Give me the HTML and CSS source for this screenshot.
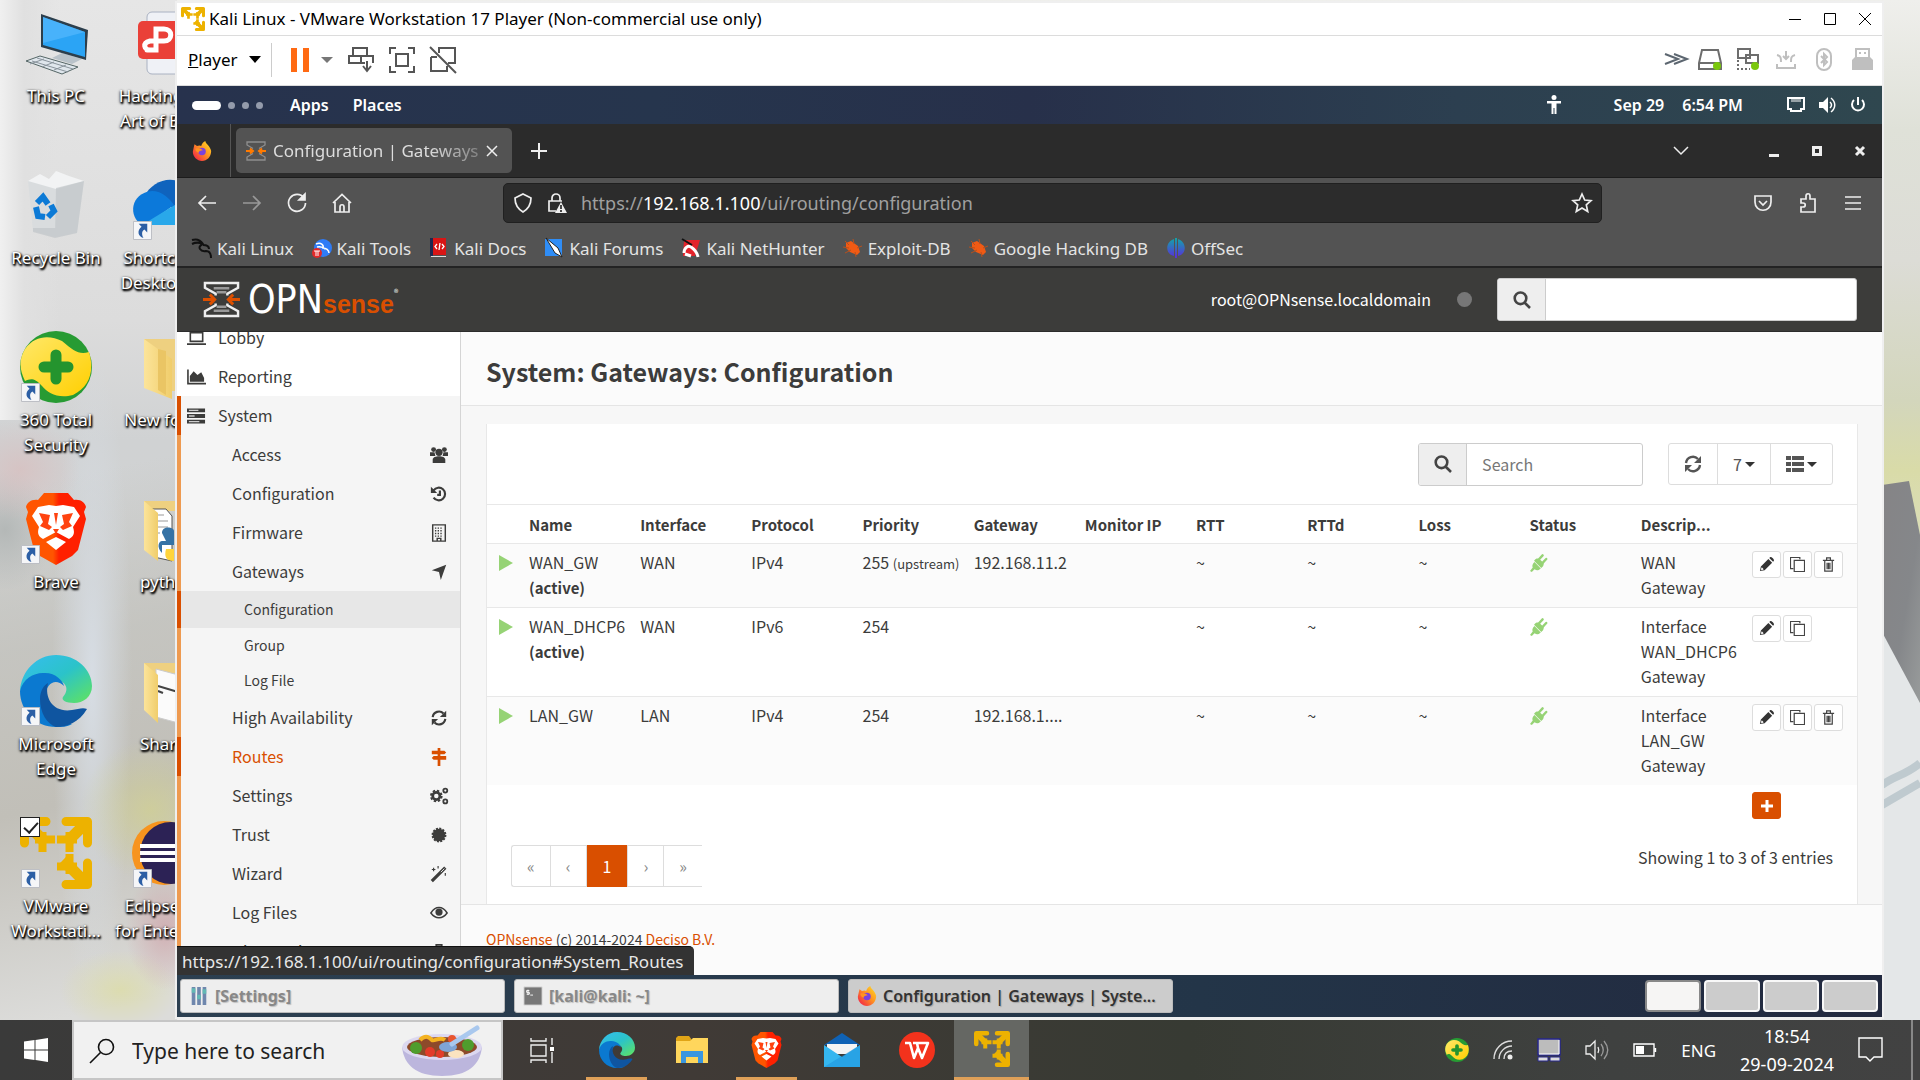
FILE: index.html
```html
<!DOCTYPE html>
<html lang="en">
<head>
<meta charset="utf-8">
<title>Configuration | Gateways | System</title>
<link rel="stylesheet" href="styles.css">
</head>
<body>
<svg class="defs" aria-hidden="true">
  <defs>
    <linearGradient id="g-edge" x1="0" y1="0" x2="1" y2="1"><stop offset="0" stop-color="#36bdf0"/><stop offset=".5" stop-color="#2bc3c9"/><stop offset="1" stop-color="#62e45c"/></linearGradient>
    <linearGradient id="g-brave" x1="0" y1="0" x2="1" y2="0"><stop offset=".45" stop-color="#ff5500"/><stop offset=".55" stop-color="#ff2000"/></linearGradient>
    <linearGradient id="g-fold" x1="0" y1="0" x2="1" y2="0"><stop offset="0" stop-color="#fce49a"/><stop offset="1" stop-color="#f0cd6b"/></linearGradient>
    <linearGradient id="g-fox" x1="1" y1="0" x2="0" y2="1"><stop offset="0" stop-color="#ffe226"/><stop offset=".45" stop-color="#ff9420"/><stop offset="1" stop-color="#f0104f"/></linearGradient>
    <linearGradient id="g-off" x1="0" y1="0" x2="0" y2="1"><stop offset="0" stop-color="#12a6a8"/><stop offset="1" stop-color="#5b2bdc"/></linearGradient>
    <linearGradient id="g-yel" x1="0" y1="0" x2="1" y2="1"><stop offset="0" stop-color="#ffe869"/><stop offset="1" stop-color="#ffcf00"/></linearGradient>
  </defs>
  <symbol id="i-vmware" viewBox="0 0 72 72"><g fill="none" stroke="#edb200"><path stroke-width="9" stroke-linecap="round" stroke-linejoin="round" d="M26 4.500H4.500V26M46 4.500H67.500V26M46 67.500H67.500V46"/><path stroke-width="11" d="M6 6 26 26M66 6 46 26M66 66 43 43"/><path stroke-width="8" d="M15 22.500H35M22.500 15V35M37 22.500H57M49.500 15V35M37 49.500H57M49.500 37V57"/></g></symbol>
  <symbol id="i-edge" viewBox="0 0 72 72"><path fill="url(#g-edge)" d="M0 36C1 16 17 0 36 0c21 0 36 15 36 31 0 11-9 17-18 17-8 0-13-3-11-6 8-9 1-17-9-18C18 21 6 25 0 36z"/><path fill="#0b79d0" d="M0 36c3-13 15-19 25-18 11 0 18 8 19 13-8-8-18-3-18 9 0 12 10 29 26 29-5 3-10 3-16 3C16 72 0 56 0 36z"/><path fill="#0f55a0" d="M20 44c0-8 4-14 8-16-4 16 6 30 24 27 6-1 11-3 15-1-8 14-21 18-31 18-9-3-16-14-16-28z"/></symbol>
  <symbol id="i-brave" viewBox="0 0 62 72"><path fill="url(#g-brave)" d="M19 0h24l6 7c7-1 11 3 12 7l-2 5 2 7-8 31-6 6-16 9-16-9-6-6L1 26l2-7-2-5c1-4 5-8 12-7z"/><path fill="#fff" d="M13 14l11-2 7 1 7-1 11 2 6 9-7 11c2 6 1 9-4 12l-13-7-13 7c-5-3-6-6-4-12L7 23zM31 44l10 5-10 8-10-8z"/><path fill="#ff4310" d="M14 20l11 2-2 9 4 3-3 3-9-4 3-4zM48 20l-11 2 2 9-4 3 3 3 9-4-3-4zM28 36h6l-3 5zM29 20h4l-2 12z"/></symbol>
  <symbol id="i-360" viewBox="0 0 72 72"><circle cx="36" cy="36" r="36" fill="#279b33"/><path fill="url(#g-yel)" d="M5 18C15 4 30 4 42 10c12 10 17 14 27 11 6 20 0 35-16 43-15 4-25-2-31-9-8-9-12-7-17-5C-1 38-1 28 5 18z"/><path stroke="#24942e" stroke-width="11" stroke-linecap="round" d="M36 24v24M24 36h24"/></symbol>
  <symbol id="i-shortcut" viewBox="0 0 20 20"><path fill="#f5f6f8" stroke="#b9bcc2" d="M.5.5h19v19H.5z"/><path fill="#2c5fa5" d="M6 3h9v9l-3-3c-3 2-3 5-1 9-6-2-7-8-2-12z"/></symbol>
  <symbol id="i-firefox" viewBox="0 0 24 24"><path fill="url(#g-fox)" d="M2 8 3 4l3 2c2-1 4-1 5 0 1-3 3-5 5-6 0 3 6 6 7 12C23 19 18 24 12 24S1 19 1 13z"/><circle cx="12" cy="12.500" r="4.500" fill="#7a42dd"/><path fill="#ff9420" d="M4 9c4-1 7 0 9 2-3 0-5 1-5 3-3-1-4-3-4-5z"/></symbol>
  <symbol id="i-opn" viewBox="0 0 38 38"><g fill="none" stroke="#eee" stroke-width="2.500"><path d="M13 15V13L2 7V2H36V7L25 13V15M13 23V25L2 31V36H36V31L25 25V23"/><path stroke="#999" d="M11 7.500H27M14 11.500H24M14 26.500H24M11 30.500H27"/><path stroke="#dd5000" stroke-width="3" d="M0 19H12M7 14l5 5-5 5M38 19H26M31 14l-5 5 5 5"/></g></symbol>
  <symbol id="i-favicon" viewBox="0 0 20 20"><g fill="none" stroke="#8f8f8f" stroke-width="1.300"><path d="M7 7.500L1 4V1h18v3l-6 3.500M7 12.500L1 16v3h18v-3l-6-3.500"/><path stroke="#ff7a00" stroke-width="2" d="M0 10h6M4 7.500L7 10l-3 2.500M20 10h-6M16 7.500L13 10l3 2.500"/></g></symbol>
  <symbol id="i-search" viewBox="0 0 20 20"><path fill="none" stroke="currentColor" stroke-width="2.600" d="M8.500 2.500a5.800 5.800 0 1 1 0 11.600 5.800 5.800 0 0 1 0-11.600zM13 13l5 5"/></symbol>
  <symbol id="i-refresh" viewBox="0 0 18 18"><path fill="none" stroke="currentColor" stroke-width="2.400" d="M2 8a7 7 0 0 1 12-4M16 10a7 7 0 0 1-12 4"/><path fill="currentColor" d="M17 1v7h-7zM1 17v-7h7z"/></symbol>
  <symbol id="i-plug" viewBox="0 0 20 20"><path fill="#96d375" d="M5 9l7 7c-3 3-6 2-7 1l-3 3-2-1 3-4C2 13 3 11 5 9zM4.500 7.500l8 8 2-2c1-2 1-3 0-4l-4-4c-2-1-4-1-6 2z"/><path stroke="#96d375" stroke-width="2.600" stroke-linecap="round" d="M9 7l5-5.500M13 11l5-5.500"/></symbol>
  <symbol id="i-pencil" viewBox="0 0 16 16"><path fill="#333" d="M1 15l1-5 8-8 4 4-8 8zM11 1l1-1c2 0 4 2 4 4l-1 1z"/><path fill="#fff" d="M3 11l2 2-2 1-1-1z"/></symbol>
  <symbol id="i-copy" viewBox="0 0 16 16"><path fill="none" stroke="#444" stroke-width="1.300" d="M3.500 12.500h-3v-12h10v2M4.500 3.500h11v12h-11z"/></symbol>
  <symbol id="i-trash" viewBox="0 0 14 16"><path fill="none" stroke="#444" stroke-width="1.300" d="M1 3.500h12M5 3V1h4v2M3 4v11h8V4M5.500 6v7M7 6v7M8.500 6v7"/></symbol>
  <symbol id="i-bug" viewBox="0 0 20 20"><path fill="#f05a14" d="M3 5l5-2 7 5 2 6-3 3-7-3-4-4z"/><path stroke="#b8501c" d="M2 3l4 4M0 9l6 1M2 15l6-3M10 1l1 5M19 8l-5 2M13 19l-1-5"/></symbol>
</svg>

<main class="desktop">
  <svg class="wall" viewBox="0 0 38 1020" preserveAspectRatio="none" aria-hidden="true">
    <defs><linearGradient id="g-rock" x1="0" y1="0" x2="1" y2="1"><stop offset="0" stop-color="#858486"/><stop offset=".6" stop-color="#85878a"/><stop offset="1" stop-color="#989b9b"/></linearGradient></defs>
    <path fill="#e4e7e8" d="M0 600h38v420H0z"/>
    <path fill="url(#g-rock)" d="M0 485L27 481 38 535V703L0 632z"/>
    <path fill="none" stroke="#bfcacf" stroke-width="8" d="M0 785c14-10 24-10 38-22M0 805l38-22"/>
  </svg>
  <ul class="shortcuts">
    <li><span class="pic"><svg viewBox="0 0 72 72"><path fill="#dfe6ec" stroke="#566" d="M6 54l14-5 38 11-16 7z"/><path stroke="#8a949c" stroke-width="1" d="M12 54l36 11M17 51l36 11M24 52l-14 5M34 55l-12 5M46 58l-12 5"/><path fill="#b9c2c9" d="M32 51l10-5 20 6-10 5z"/><path fill="#2c3e4c" d="M21 7l47 16-2 30-45-13z"/><path fill="#2ba4f5" d="M23 10l42 15v25L23 38z"/><path fill="#5bbcff" d="M23 10l42 15-42 11z" opacity=".6"/></svg></span><span>This PC</span></li>
    <li><span class="pic"><svg viewBox="0 0 72 72"><rect x="15" y="5" width="50" height="62" rx="5" fill="#eff1f6" stroke="#aab2c2"/><rect x="6" y="14" width="44" height="38" rx="5" fill="#ea4038"/><path fill="none" stroke="#fff" stroke-width="5" stroke-linecap="round" d="M15 43h9V22h8c9 0 9 12 0 12H18c-8 2-6 9 0 9"/></svg></span><span>Hacking The<br>Art of Expl...</span></li>
    <li><span class="pic"><svg viewBox="0 0 72 72"><path fill="#d9dcde" d="M8 12h56l-7 52-22 4-22-6z"/><path fill="#f2f3f4" d="M8 12l12-7 9 5 7-8 13 5 15 5-28 8z"/><path fill="#bcc2c5" d="M36 19l28-7-7 52-22 4zM13 59l44 0v5l-22 5-22-6z" opacity=".6"/><path fill="none" stroke="#0c7ad6" stroke-width="6" d="M17 34l6-6 5 7M16 38l2 9 7 1M28 48l6-6-3-6"/></svg></span><span>Recycle Bin</span></li>
    <li><span class="pic"><svg viewBox="0 0 72 72"><path fill="#0f63bd" d="M12 28C22 8 48 4 60 24v14H18z"/><path fill="#0c79da" d="M10 56C-4 48-2 24 20 22c10 0 18 8 22 14l-28 20z"/><path fill="#29a8ea" d="M10 56l36-22 26 4v18z"/></svg><svg class="link"><use href="#i-shortcut"/></svg></span><span>Shortcut to<br>Desktop file</span></li>
    <li><span class="pic"><svg><use href="#i-360"/></svg><svg class="link"><use href="#i-shortcut"/></svg></span><span>360 Total<br>Security</span></li>
    <li><span class="pic"><svg viewBox="0 0 72 72"><path fill="#eed080" d="M12 8h50v52H24z"/><path fill="url(#g-fold)" d="M12 8l28 20v40L12 57z"/><path fill="#eac564" d="M26 18l8 2v44l-8-5z"/></svg></span><span>New folder</span></li>
    <li><span class="pic"><svg><use href="#i-brave"/></svg><svg class="link"><use href="#i-shortcut"/></svg></span><span>Brave</span></li>
    <li><span class="pic"><svg viewBox="0 0 72 72"><path fill="#eed080" d="M12 8h50v10H12z"/><path fill="#fff" stroke="#555" d="M20 16h14l6 7v45L22 64z"/><path stroke="#999" d="M22 22h10M22 28h14M22 34h14M22 40h6"/><path fill="#3572a5" d="M30 40c0-8 12-6 12-2v14H30v8c-6-6-3-12 0-12h4z"/><path fill="#ffd43b" d="M34 56h8v12c-8 0-10-4-8-12z"/><path fill="url(#g-fold)" d="M12 8l14 12v48L12 57z"/></svg></span><span>python</span></li>
    <li><span class="pic"><svg><use href="#i-edge"/></svg><svg class="link"><use href="#i-shortcut"/></svg></span><span>Microsoft<br>Edge</span></li>
    <li><span class="pic"><svg viewBox="0 0 72 72"><path fill="#eed080" d="M12 8h50v10H12z"/><path fill="#fbfbfb" stroke="#ccc" d="M24 14l30 8v48l-30-8z"/><path stroke="#444" stroke-width="2" d="M26 31l20 6M26 36l5 2"/><path fill="url(#g-fold)" d="M12 8l14 12v48L12 55z"/></svg></span><span>Shared</span></li>
    <li><span class="pic"><svg><use href="#i-vmware"/></svg><svg class="link"><use href="#i-shortcut"/></svg><input class="pick" type="checkbox" checked aria-label="Select VMware Workstation"></span><span>VMware<br>Workstati...</span></li>
    <li><span class="pic"><svg viewBox="0 0 72 72"><circle cx="32" cy="36" r="32" fill="#f7941e"/><circle cx="39" cy="36" r="31" fill="#2c2255"/><path stroke="#fff" stroke-width="4" d="M8 29h64M8 36h64M8 43h64"/></svg><svg class="link"><use href="#i-shortcut"/></svg></span><span>Eclipse IDE<br>for Enterpri...</span></li>
  </ul>

  <section class="vm">
    <header class="vm-title">
      <svg class="s24"><use href="#i-vmware"/></svg>
      <h2>Kali Linux - VMware Workstation 17 Player (Non-commercial use only)</h2>
      <div class="vm-ctl">
        <button aria-label="Minimise"><svg viewBox="0 0 12 12"><path d="M0 6.500h12"/></svg></button>
        <button aria-label="Maximise"><svg viewBox="0 0 12 12"><path d="M.5.5h11v11H.5z"/></svg></button>
        <button aria-label="Close"><svg viewBox="0 0 12 12"><path d="M0 0l12 12M12 0L0 12"/></svg></button>
      </div>
    </header>
    <div class="vm-tools">
      <button class="player"><span><u>P</u>layer</span><svg width="12" height="7" viewBox="0 0 12 7"><path d="M0 0h12L6 7z"/></svg></button>
      <button class="pause" aria-label="Suspend"><svg width="18" height="24" viewBox="0 0 18 24"><path fill="#ff6a13" d="M0 0h6v24H0zM12 0h6v24h-6z"/></svg></button>
      <button class="caret" aria-label="Power options"><svg width="12" height="6" viewBox="0 0 12 6"><path fill="#777" d="M0 0h12L6 6z"/></svg></button>
      <div class="vm-icons">
        <button aria-label="Send keys"><svg viewBox="0 0 28 28"><path d="M6 2h14v8H6zM2 10h12v7H2zM14 10h12v7M14 17h4M20 15v9M16 20l4 5 4-5"/></svg></button>
        <button aria-label="Full screen"><svg viewBox="0 0 28 28"><path d="M2 8V2h6M20 2h6v6M26 20v6h-6M8 26H2v-6M8 8h12v12H8z"/></svg></button>
        <button aria-label="Unity"><svg viewBox="0 0 28 28"><path d="M10 7V2h16v15h-7M2 11v14h16v-5M2 11h6M1 1l26 26"/></svg></button>
      </div>
      <div class="vm-devices">
        <svg viewBox="0 0 26 26"><path stroke="#5c6670" d="M6 7l13 5-13 5M15 7l13 5-13 5"/></svg>
        <svg viewBox="0 0 26 26"><path d="M5 3h16l3 13v6H2v-6zM2 16h22"/><circle cx="20" cy="19" r="4" fill="#7ac70c"/></svg>
        <svg viewBox="0 0 26 26"><path d="M3 2h12v9H3zM11 8h12v8H11z"/><path stroke-dasharray="2 2" d="M3 13v9h12"/><circle cx="20" cy="19" r="4" fill="#7ac70c"/></svg>
        <svg class="off" viewBox="0 0 26 26"><path d="M4 17v4h18v-4M13 4v7M10 9l3 3 3-3M4 8c4 1 4 3 4 7M22 8c-4 1-4 3-4 7"/></svg>
        <svg class="off" viewBox="0 0 26 26"><rect x="6" y="2" width="14" height="21" rx="7"/><path d="M10 9l6 6-3 3V7l3 3-6 6"/></svg>
        <svg class="off" viewBox="0 0 26 26"><path d="M7 2h13v9H7zM10 6h2M15 6h2"/><path fill="#bfbfbf" stroke="none" d="M3 13l3-3h15l3 3v10H3z"/></svg>
      </div>
    </div>

    <div class="panel">
      <div class="spaces"><i></i><b></b><b></b><b></b></div>
      <a href="#">Apps</a><a href="#">Places</a>
      <svg class="person" width="16" height="20" viewBox="0 0 16 20"><circle cx="8" cy="2.500" r="2.500"/><path d="M1 6h14v2.500h-4.500V19h-2v-6h-1v6h-2V8.500H1z"/></svg>
      <time><span>Sep 29</span><span>6:54 PM</span></time>
      <div class="sys">
        <svg viewBox="0 0 18 18"><path fill="none" stroke="#fff" stroke-width="2" d="M1 2h16v11h-3v2H4v-2H1z"/><path stroke="#fff" d="M5 3v3M7 3v3M9 3v3M11 3v3M13 3v3"/></svg>
        <svg viewBox="0 0 18 18"><path d="M1 6h4l5-5v16l-5-5H1z"/><path fill="none" stroke="#fff" stroke-width="1.500" d="M12 6c2 2 2 4 0 6M13 2c5 4 5 10 0 14"/></svg>
        <svg viewBox="0 0 18 18"><path fill="none" stroke="#fff" stroke-width="2" d="M5 4a6 6 0 1 0 8 0M9 1v8"/></svg>
      </div>
    </div>

    <div class="tabs">
      <button class="view" aria-label="Firefox View"><svg width="20" height="20"><use href="#i-firefox"/></svg></button>
      <div class="tab"><svg width="20" height="20"><use href="#i-favicon"/></svg><span>Configuration | Gateways</span><button aria-label="Close tab"><svg width="10" height="10" viewBox="0 0 10 10"><path d="M0 0l10 10M10 0L0 10"/></svg></button></div>
      <button class="plus" aria-label="New tab"><svg width="16" height="16" viewBox="0 0 16 16"><path d="M8 0v16M0 8h16"/></svg></button>
      <button class="all" aria-label="List all tabs"><svg width="16" height="10" viewBox="0 0 16 10"><path d="M1 1l7 7 7-7"/></svg></button>
      <div class="fx-ctl">
        <button aria-label="Minimise"><svg width="12" height="12" viewBox="0 0 12 12"><path stroke-width="3" d="M1 10.500h10"/></svg></button>
        <button aria-label="Maximise"><svg width="12" height="12" viewBox="0 0 12 12"><path stroke-width="3" d="M2.500 2.500h7v7h-7z"/></svg></button>
        <button aria-label="Close"><svg width="12" height="12" viewBox="0 0 12 12"><path stroke-width="3" d="M2 2l8 8M10 2l-8 8"/></svg></button>
      </div>
    </div>

    <div class="nav">
      <div class="nav-l">
        <button aria-label="Back"><svg viewBox="0 0 20 20"><path d="M19 10H2M9 3l-7 7 7 7"/></svg></button>
        <button aria-label="Forward" disabled><svg viewBox="0 0 20 20"><path d="M1 10h17M11 3l7 7-7 7"/></svg></button>
        <button aria-label="Reload"><svg viewBox="0 0 20 20"><path d="M17 5a8.500 8.500 0 1 0 1.500 5"/><path fill="#eee" d="M18 1v6h-6z"/></svg></button>
        <button aria-label="Home"><svg viewBox="0 0 20 20"><path d="M1 10l9-8.500 9 8.500M3 9v10h14V9M8 19v-5c0-3 4-3 4 0v5"/></svg></button>
      </div>
      <div class="url">
        <svg viewBox="0 0 20 20"><path d="M10 1l8 4c0 7-3 11-8 14C5 16 2 12 2 5z"/></svg>
        <svg viewBox="0 0 20 20"><path d="M5 8V5a4 4 0 0 1 8 0v3M9 18H2V8h13"/><path fill="#eee" stroke="none" d="M14 9l6 11H8z"/><path stroke="#2b2b2b" d="M14 12v4M14 17v2"/></svg>
        <p>https://<b>192.168.1.100</b>/ui/routing/configuration</p>
        <button aria-label="Bookmark"><svg viewBox="0 0 20 20"><path d="M10 1l2.700 6 6.300.6-4.700 4.300 1.400 6.600L10 15l-5.700 3.500 1.400-6.600L1 7.600 7.300 7z"/></svg></button>
      </div>
      <div class="nav-r">
        <button aria-label="Pocket"><svg viewBox="0 0 20 20"><path d="M2 3h16v6c0 11-16 11-16 0zM6 8l4 4 4-4"/></svg></button>
        <button aria-label="Extensions"><svg viewBox="0 0 20 20"><path d="M3 19V14h2c3 0 3-4 0-4H3V6h5V3c0-3 4-3 4 0v3h5v13z"/></svg></button>
        <button aria-label="Menu"><svg viewBox="0 0 20 20"><path d="M2 4h16M2 10h16M2 16h16"/></svg></button>
      </div>
    </div>
    <nav class="marks">
      <a href="#"><svg viewBox="0 0 20 20"><path fill="none" stroke="#111" stroke-width="2" d="M0 2c6-2 9 1 11 4-7 3-2 8 3 7 4 0 5 3 5 7M0 6c4-2 7-2 11 0M11 7c4 0 6 2 6 4"/></svg>Kali Linux</a>
      <a href="#"><svg viewBox="0 0 20 20"><circle cx="11" cy="10" r="9" fill="#2f7cf6"/><path fill="none" stroke="#fff" stroke-width="1.500" d="M4 6c5-2 8 1 7 4 3 0 6 2 6 5M5 9c4-1 6 0 8 2"/><circle cx="5" cy="15" r="5" fill="#e02a2a"/><path stroke="#fff" d="M2 13h6M4 13v5M6 13v5"/></svg>Kali Tools</a>
      <a href="#"><svg viewBox="0 0 20 20"><path fill="#1d2850" d="M1 0h3v18H1z"/><path fill="#d81515" d="M4 0h13v17H4z"/><path stroke="#ddd" d="M2 18.500h15"/><path fill="none" stroke="#fff" stroke-width="1.300" d="M8 6L6 8.500 8 11M13 6l2 2.500-2 2.500M11 5l-1 7"/></svg>Kali Docs</a>
      <a href="#"><svg viewBox="0 0 20 20"><path fill="#2f8df6" d="M1 1h17v17H1z"/><path fill="#fff" stroke="#222" d="M2 0l12 10 4 9-7-4z"/></svg>Kali Forums</a>
      <a href="#"><svg viewBox="0 0 20 20"><path fill="#e3242b" d="M3 2h16L14 18H2z"/><path fill="none" stroke="#fff" stroke-width="3" d="M3 15c0-5 4-8 7-6s6 5 7 10M4 16l6 2"/><path stroke="#111" stroke-width="2" d="M1 1l10 6"/></svg>Kali NetHunter</a>
      <a href="#"><svg><use href="#i-bug"/></svg>Exploit-DB</a>
      <a href="#"><svg><use href="#i-bug"/></svg>Google Hacking DB</a>
      <a href="#"><svg viewBox="0 0 20 20"><path fill="url(#g-off)" d="M8 1v17C-1 16-1 4 8 1zM9 0h2v20H9zM12 1v17c9-2 9-14 0-17z"/></svg>OffSec</a>
    </nav>

    <header class="opn">
      <a class="brand" href="#" aria-label="OPNsense"><svg width="37" height="37"><use href="#i-opn"/></svg><span class="opn-a">OPN</span><span class="opn-b">sense</span><sup>®</sup></a>
      <span class="user">root@OPNsense.localdomain</span>
      <i class="dot"></i>
      <label class="group find"><span><svg><use href="#i-search"/></svg></span><input type="text" aria-label="Search menu"></label>
    </header>

    <div class="page">
      <nav class="side">
        <ul>
          <li><a href="#"><svg class="pre" viewBox="0 0 20 16"><path fill="none" stroke="#3c3c3b" stroke-width="1.700" d="M3.500 2.500h13v9h-13zM0 14.500h20"/></svg>Lobby</a></li>
          <li><a href="#"><svg class="pre" viewBox="0 0 20 16"><path fill="none" stroke="#3c3c3b" stroke-width="1.700" d="M1 0v15h19"/><path fill="#3c3c3b" d="M3 13V7l4-5 4 4 4-3 3 6v4z"/></svg>Reporting</a></li>
          <li class="open"><a href="#" class="on"><svg class="pre" viewBox="0 0 20 16"><path fill="#3c3c3b" d="M0 0h19v4H0zM0 6h19v4H0zM0 12h19v4H0z"/><path stroke="#ccc" stroke-width="1.400" d="M2 2h10M2 8h6M2 14h11"/></svg>System</a>
            <ul>
              <li><a href="#">Access<svg viewBox="0 0 20 20"><circle cx="10" cy="7" r="4"/><circle cx="4" cy="4" r="2.700"/><circle cx="16" cy="4" r="2.700"/><path d="M3 19v-4c0-5 14-5 14 0v4zM0 7h5l1 4H0zM20 7h-5l-1 4h6z"/></svg></a></li>
              <li><a href="#">Configuration<svg viewBox="0 0 20 20"><path fill="none" stroke="#3c3c3b" stroke-width="2.400" d="M4 6a7 7 0 1 1 0 8M11 6v5H8"/><path d="M1 2v7h7z"/></svg></a></li>
              <li><a href="#">Firmware<svg viewBox="0 0 20 20"><path fill="none" stroke="#3c3c3b" stroke-width="1.600" d="M3 1h14v18H3zM8 19v-3h4v3"/><path stroke="#3c3c3b" stroke-width="1.500" stroke-dasharray="1.500 1.500" d="M5.500 4.500h9M5.500 7.500h9M5.500 10.500h9M5.500 13.500h9"/></svg></a></li>
              <li><a href="#">Gateways<svg viewBox="0 0 20 20"><path d="M18 2l-6 17-2-9-8-2z"/></svg></a>
                <ul>
                  <li><a href="#" class="on sel">Configuration</a></li>
                  <li><a href="#">Group</a></li>
                  <li><a href="#">Log File</a></li>
                </ul></li>
              <li><a href="#">High Availability<svg viewBox="-1 -1 20 20"><use href="#i-refresh" width="18" height="18"/></svg></a></li>
              <li><a href="#" class="on hot">Routes<svg viewBox="0 0 20 20"><path d="M8.500 0h3v20h-3zM2 3h14l2 2-2 2H2zM4 9h14v4H4l-2-2z"/></svg></a></li>
              <li><a href="#">Settings<svg viewBox="0 0 20 20"><g fill="none" stroke="#3c3c3b"><circle cx="7" cy="10" r="4" stroke-width="3"/><circle cx="7" cy="10" r="6" stroke-width="2" stroke-dasharray="2.700 2"/><circle cx="17" cy="4" r="2.200" stroke-width="2"/><circle cx="17" cy="16" r="2.200" stroke-width="2"/></g></svg></a></li>
              <li><a href="#">Trust<svg viewBox="0 0 20 20"><circle cx="10" cy="10" r="7"/><circle cx="10" cy="10" r="7" fill="none" stroke="#3c3c3b" stroke-width="2.500" stroke-dasharray="2.200 1.400"/></svg></a></li>
              <li><a href="#">Wizard<svg viewBox="0 0 20 20"><path stroke="#3c3c3b" stroke-width="3.500" d="M2 18L17 3"/><path stroke="#f5f5f5" d="M12 8l4-4"/><path stroke="#3c3c3b" stroke-width="1.300" d="M4 3v4M2 5h4M9 1v3M17 9v3"/></svg></a></li>
              <li><a href="#">Log Files<svg viewBox="0 0 20 20"><path fill="none" stroke="#3c3c3b" stroke-width="1.700" d="M1 10c5-8 13-8 18 0-5 7-13 7-18 0z"/><circle cx="10" cy="9" r="4"/></svg></a></li>
              <li><a href="#">Diagnostics<svg viewBox="0 0 20 20"><path fill="none" stroke="#3c3c3b" stroke-width="2" d="M7 5V2h6v3"/><path d="M1 5h18v12H1z"/></svg></a></li>
            </ul></li>
        </ul>
      </nav>

      <section class="content">
        <h1>System: Gateways: Configuration</h1>
        <div class="card">
          <div class="bar">
            <label class="group seek"><span><svg><use href="#i-search"/></svg></span><input type="text" placeholder="Search" aria-label="Search"></label>
            <div class="btns">
              <button aria-label="Refresh"><svg width="18" height="18"><use href="#i-refresh"/></svg></button>
              <button>7<svg width="10" height="5" viewBox="0 0 10 5"><path fill="#333" d="M0 0h10L5 5z"/></svg></button>
              <button aria-label="Columns"><svg width="18" height="16" viewBox="0 0 18 16"><path fill="#555" d="M0 0h5v4H0zM6 0h12v4H6zM0 6h5v4H0zM6 6h12v4H6zM0 12h5v4H0zM6 12h12v4H6z"/></svg><svg width="10" height="5" viewBox="0 0 10 5"><path fill="#333" d="M0 0h10L5 5z"/></svg></button>
            </div>
          </div>
          <table>
            <colgroup><col class="c-run"><col span="11"><col class="c-cmd"></colgroup>
            <thead><tr><th></th><th>Name</th><th>Interface</th><th>Protocol</th><th>Priority</th><th>Gateway</th><th>Monitor IP</th><th>RTT</th><th>RTTd</th><th>Loss</th><th>Status</th><th>Descrip...</th><th></th></tr></thead>
            <tbody>
              <tr><td><i class="run"></i></td><td>WAN_GW <b>(active)</b></td><td>WAN</td><td>IPv4</td><td class="wide">255 <small>(upstream)</small></td><td>192.168.11.2</td><td></td><td>~</td><td>~</td><td>~</td><td><svg class="plug"><use href="#i-plug"/></svg></td><td>WAN Gateway</td>
                <td class="cmd"><div><button aria-label="Edit"><svg><use href="#i-pencil"/></svg></button><button aria-label="Clone"><svg><use href="#i-copy"/></svg></button><button aria-label="Delete"><svg><use href="#i-trash"/></svg></button></div></td></tr>
              <tr><td><i class="run"></i></td><td>WAN_DHCP6 <b>(active)</b></td><td>WAN</td><td>IPv6</td><td>254</td><td></td><td></td><td>~</td><td>~</td><td>~</td><td><svg class="plug"><use href="#i-plug"/></svg></td><td>Interface WAN_DHCP6 Gateway</td>
                <td class="cmd"><div><button aria-label="Edit"><svg><use href="#i-pencil"/></svg></button><button aria-label="Clone"><svg><use href="#i-copy"/></svg></button></div></td></tr>
              <tr><td><i class="run"></i></td><td>LAN_GW</td><td>LAN</td><td>IPv4</td><td>254</td><td class="wide">192.168.1....</td><td></td><td>~</td><td>~</td><td>~</td><td><svg class="plug"><use href="#i-plug"/></svg></td><td>Interface LAN_GW Gateway</td>
                <td class="cmd"><div><button aria-label="Edit"><svg><use href="#i-pencil"/></svg></button><button aria-label="Clone"><svg><use href="#i-copy"/></svg></button><button aria-label="Delete"><svg><use href="#i-trash"/></svg></button></div></td></tr>
            </tbody>
            <tfoot><tr><td colspan="12"></td><td class="cmd"><button class="add" aria-label="Add"><svg width="12" height="12" viewBox="0 0 12 12"><path stroke="#fff" stroke-width="3" d="M6 0v12M0 6h12"/></svg></button></td></tr></tfoot>
          </table>
          <div class="pager">
            <div class="pages"><a href="#">«</a><a href="#">‹</a><a href="#" class="cur">1</a><a href="#">›</a><a href="#">»</a></div>
            <p>Showing 1 to 3 of 3 entries</p>
          </div>
        </div>
        <footer><a href="#">OPNsense</a> (c) 2014-2024 <a href="#">Deciso B.V.</a></footer>
      </section>
      <output class="hint">https://192.168.1.100/ui/routing/configuration#System_Routes</output>
    </div>

    <div class="windows">
      <button class="dim"><svg viewBox="0 0 22 22"><path stroke="#6f87ad" stroke-width="4" d="M5 1v20M11 1v20M17 1v20"/><path stroke="#62b9b4" stroke-width="5" d="M3 5h4M9 12h4M15 6h4"/></svg>[Settings]</button>
      <button class="dim"><svg viewBox="0 0 22 22"><path fill="#777" stroke="#ddd" d="M1 1h20v20H1z"/><path fill="none" stroke="#fff" d="M7 5H4v2h3v2H4M5.500 4v6M8 10h3"/></svg>[kali@kali: ~]</button>
      <button class="live"><svg viewBox="0 0 24 24"><use href="#i-firefox"/></svg>Configuration | Gateways | Syste...</button>
      <div class="desks"><i class="at"></i><i></i><i></i><i></i></div>
    </div>
  </section>
</main>

<footer class="taskbar">
  <button class="start" aria-label="Start"><svg width="24" height="24" viewBox="0 0 24 24"><path fill="#fff" d="M0 3.500l10.500-1.500v9.500H0zM11.500 2L24 0v11.500H11.500zM0 12.500h10.500V22L0 20.500zM11.500 12.500H24V24l-12.500-2z"/></svg></button>
  <label class="search"><svg width="26" height="26" viewBox="0 0 26 26"><circle cx="17" cy="9" r="7.500" fill="none" stroke="#111" stroke-width="1.600"/><path stroke="#111" stroke-width="1.600" d="M11.500 14.500L1 25"/></svg><input type="text" placeholder="Type here to search" aria-label="Type here to search">
    <svg width="84" height="52" viewBox="0 0 84 52"><path fill="#bcb6dd" d="M0 22c2 18 14 29 40 29s38-11 40-29z"/><ellipse cx="40" cy="22" rx="40" ry="13" fill="#dcd8f0"/><ellipse cx="40" cy="22" rx="35" ry="10" fill="#8d4a2a"/><path stroke="#f4b321" stroke-width="4" fill="none" d="M18 15c6-6 10-2 12 0s8-4 13 0"/><circle cx="14" cy="23" r="6" fill="#4f9d2d"/><circle cx="66" cy="20" r="6" fill="#4f9d2d"/><circle cx="28" cy="27" r="5" fill="#e23c2a"/><circle cx="38" cy="29" r="4" fill="#e23c2a"/><circle cx="50" cy="14" r="4" fill="#e8552f"/><ellipse cx="54" cy="29" rx="8" ry="4" fill="#fbe3c0"/><ellipse cx="46" cy="22" rx="9" ry="5" fill="#7fa5d6"/><path stroke="#a9c8ee" stroke-width="5" stroke-linecap="round" d="M50 19L75 3"/></svg></label>
  <div class="apps">
    <button aria-label="Task view"><svg width="26" height="26" viewBox="0 0 26 26"><path fill="none" stroke="#eee" stroke-width="1.400" d="M2 1v3h15V1M2 8h15v11H2zM2 26v-3h15v3M23 1v7M23 15v11"/><path fill="#fff" d="M21 10h4v4h-4z"/></svg></button>
    <button class="open" aria-label="Microsoft Edge"><svg width="36" height="36"><use href="#i-edge"/></svg></button>
    <button aria-label="File Explorer"><svg width="32" height="28" viewBox="0 0 32 28"><path fill="#e0a416" d="M0 2l2-2h11l3 4v5H0z"/><path fill="#ffd65c" d="M0 5h14l3-3h15v25H0z"/><path fill="#3a96e0" d="M5 27V15h22v12h-5v-6H10v6z"/></svg></button>
    <button class="open" aria-label="Brave"><svg width="31" height="36"><use href="#i-brave"/></svg></button>
    <button aria-label="Mail"><svg width="36" height="34" viewBox="0 0 36 34"><path fill="#0f62b5" d="M0 12L18 0l18 12z"/><path fill="#f4f4f4" d="M3 11h30v10H3z"/><path fill="#35b6ef" d="M0 12l18 12 18-12v22H0z"/><path fill="#1b8fdc" d="M0 34l36-22v22z" opacity=".5"/></svg></button>
    <button aria-label="WPS Office"><svg width="36" height="36" viewBox="0 0 36 36"><circle cx="18" cy="18" r="18" fill="#f3321c"/><path fill="none" stroke="#fff" stroke-width="2.600" stroke-linejoin="round" d="M6 11h5l4 15 4-10 4 10 6-15H14M19 16l-1-5"/></svg></button>
    <button class="front" aria-label="VMware Player"><svg width="36" height="36"><use href="#i-vmware"/></svg></button>
  </div>
  <div class="tray">
    <svg width="24" height="24"><use href="#i-360"/></svg>
    <svg width="20" height="20" viewBox="0 0 20 20"><g fill="none" stroke="#ddd" stroke-width="1.400"><path d="M1 19C1 9 9 1 19 1M6 19c0-7 6-13 13-13M11 19c0-5 3-8 8-8"/></g><circle cx="17" cy="17" r="2.500" fill="#eee"/></svg>
    <svg width="24" height="24" viewBox="0 0 24 24"><path fill="#bcbcbc" stroke="#26268c" stroke-width="1.500" d="M1 1h22v16H1z"/><path fill="none" stroke="#fff" d="M2 16h20V2"/><path fill="#ddd" stroke="#26268c" d="M1 19h10v4H1zM13 19h10v4H13z"/></svg>
    <svg width="24" height="22" viewBox="0 0 24 22"><g fill="none" stroke="#eee" stroke-width="1.300"><path d="M1 7h4l5-5v18l-5-5H1zM13 8c1 2 1 4 0 6"/><path stroke="#999" d="M16 5c3 4 3 8 0 12M19 2c5 6 5 12 0 18"/></g></svg>
    <svg width="24" height="14" viewBox="0 0 24 14"><path fill="none" stroke="#fff" stroke-width="1.400" d="M1 1h20v12H1zM22.500 5v4"/><path fill="#fff" d="M3 3h8v8H3z"/></svg>
    <span>ENG</span>
    <time>18:54<br>29-09-2024</time>
    <svg width="25" height="26" viewBox="0 0 25 26"><path fill="none" stroke="#fff" stroke-width="1.400" d="M1 1h23v19h-8l-4 4-4-4H1z"/></svg>
  </div>
</footer>
</body>
</html>
```
FILE: styles.css
```css
* { box-sizing: border-box; }
body {
  margin: 0; height: 100vh; overflow: hidden;
  display: flex; flex-direction: column;
  font-family: "Noto Sans", "Open Sans", sans-serif; color: #3c3c3b;
}
ul { list-style: none; margin: 0; padding: 0; }
a { color: inherit; text-decoration: none; }
button { border: 0; background: none; padding: 0; margin: 0; font: inherit; color: inherit; display: flex; align-items: center; justify-content: center; }
h1, h2, p { margin: 0; font-weight: 400; }
input { font: inherit; border: 0; outline: 0; min-width: 0; }
svg { display: block; flex: none; overflow: visible; }
.defs { position: absolute; width: 0; height: 0; }

/* desktop */
.desktop {
  flex: 1; min-height: 0; position: relative; overflow: hidden;
  background:
    radial-gradient(ellipse 60px 50px at 20px 470px, #d9bcbcaa, transparent),
    radial-gradient(ellipse 70px 70px at 150px 810px, #d3d28caa, transparent),
    radial-gradient(ellipse 40px 60px at 165px 930px, #cf9fa6aa, transparent),
    radial-gradient(ellipse 60px 40px at 120px 990px, #dcdcb0, transparent),
    radial-gradient(ellipse 40px 330px at 92px 680px, #d7dde4, transparent),
    radial-gradient(ellipse 50px 60px at 5px 530px, #b4b8b7, transparent),
    linear-gradient(168deg, transparent 0 480px, #bfbeb8aa 640px, #c1bfb8 800px, #dcdcda 1010px) 0 0 / 177px 100% no-repeat,
    linear-gradient(90deg, #f0f0f0 0, #e0e0e0 24px, #e4e4e400 60px) 0 0 / 177px 420px no-repeat,
    linear-gradient(180deg, #e6e6e6 0, #dcdcdc 320px, #d0d2d3 440px, #d2d2cd 100%) 0 0 / 177px 100% no-repeat,
    linear-gradient(180deg, #efefec 0, #dfe1d8 130px, #dcdcd6 260px, #d3d6bc 400px, #d9dba8 470px, #dfe4e4 700px, #e6eaea 860px, #f0f0ef 100%);
}
.wall { position: absolute; right: 0; top: 0; width: 38px; height: 100%; }
.shortcuts {
  display: grid; grid-template-columns: 112px 112px; grid-auto-rows: 162px; padding-top: 7px;
  font-size: 17px; line-height: 25px; color: #fff; text-align: center;
  text-shadow: 1px 1px 2px #000, 0 1px 3px #000, 1px 2px 2px #000;
}
.shortcuts li { display: flex; flex-direction: column; align-items: center; gap: 4px; white-space: nowrap; }
.pic { position: relative; width: 72px; height: 72px; }
.pic > svg { width: 72px; height: 72px; }
.pic .link { position: absolute; left: 1px; bottom: 1px; width: 19px; height: 19px; }
.pick { position: absolute; left: 0; top: 0; width: 20px; height: 20px; margin: 0; appearance: none; background: #fff; border: 1px solid #222; }
.pick::after { content: ""; position: absolute; left: 6px; top: 1px; width: 6px; height: 12px; border: solid #222; border-width: 0 2px 2px 0; transform: rotate(42deg); }

/* virtual machine window */
.vm {
  position: absolute; left: 177px; right: 38px; top: 3px; bottom: 3px;
  display: flex; flex-direction: column; background: #fff; box-shadow: 0 0 0 2px #efefef;
}
.vm-title { display: flex; align-items: center; gap: 4px; height: 33px; padding-left: 4px; border-bottom: 1px solid #dcdcdc; color: #000; }
.s24 { width: 24px; height: 24px; }
.vm-title h2 { flex: 1; font-size: 17px; line-height: 32px; }
.vm-ctl { display: flex; gap: 23px; padding-right: 11px; }
.vm-ctl svg { width: 12px; height: 12px; fill: none; stroke: #000; }
.vm-tools { display: flex; align-items: center; height: 50px; padding: 0 7px 2px 11px; border-bottom: 1px solid #ddd; color: #000; font-size: 17px; }
.player { gap: 11px; padding-right: 10px; height: 34px; border-right: 1px solid #ccc; }
.pause { margin-left: 19px; }
.caret { margin-left: 12px; }
.vm-icons { display: flex; gap: 13px; margin-left: 14px; flex: 1; }
.vm-icons svg { width: 28px; height: 28px; fill: none; stroke: #555; stroke-width: 2; }
.vm-devices { display: flex; gap: 12px; }
.vm-devices svg { width: 26px; height: 26px; fill: none; stroke: #6d6d6d; stroke-width: 2; }
.vm-devices circle { stroke: none; }
.vm-devices .off { stroke: #bfbfbf; }

/* guest top panel */
.panel {
  display: flex; align-items: center; height: 38px; padding: 0 15px;
  background: linear-gradient(90deg, #27324d, #26354d 28%, #27304a 50%, #2c3f50 75%, #2f474f);
  color: #fff; font-size: 16px; font-weight: 600;
}
.spaces { display: flex; align-items: center; gap: 7px; margin-right: 27px; }
.spaces i { width: 29px; height: 9px; border-radius: 5px; background: #fff; }
.spaces b { width: 7px; height: 7px; border-radius: 50%; background: #949bab; }
.panel a { margin-right: 24px; }
.panel svg { fill: #fff; }
.person { margin-left: auto; }
.panel time { display: flex; gap: 18px; margin: 0 44px 0 52px; }
.sys { display: flex; gap: 13px; }
.sys svg { width: 18px; height: 18px; }

/* browser chrome */
.tabs { display: flex; align-items: center; height: 54px; background: #2b2b2b; border-bottom: 1px solid #1c1c1c; color: #ddd; font-size: 17px; padding-right: 16px; }
.tabs svg { fill: none; stroke: #eee; stroke-width: 2; }
.tab button svg, .all svg { stroke-width: 1.500; }
.view { width: 54px; height: 100%; padding-right: 4px; border-right: 1px solid #555; }
.tabs .view svg, .tab > svg { stroke: none; }
.tab { display: flex; align-items: center; gap: 7px; width: 276px; height: 45px; margin-left: 5px; padding: 0 15px 0 10px; border-radius: 5px; background: #535353; }
.tab span { flex: 1; overflow: hidden; white-space: nowrap; mask-image: linear-gradient(90deg, #000 75%, #0005); }
.plus { margin-left: 19px; }
.all { margin-left: auto; }
.fx-ctl { display: flex; gap: 31px; margin-left: 79px; }
.nav { display: flex; align-items: center; height: 50px; background: #535353; padding: 0 19px 0 20px; }
.nav svg { width: 20px; height: 20px; fill: none; stroke: #eee; stroke-width: 1.700; }
.nav-l { display: flex; gap: 25px; width: 306px; }
.nav-l button:disabled { opacity: .45; }
.url { flex: 1; display: flex; align-items: center; gap: 14px; height: 40px; padding: 0 9px; border: 1px solid #202020; border-radius: 5px; background: #2c2c2c; font-size: 18px; color: #a0a0a0; }
.url p { flex: 1; }
.url b { color: #fff; font-weight: 400; }
.nav-r { display: flex; gap: 25px; margin-left: 151px; }
.marks { display: flex; align-items: center; gap: 18px; height: 40px; padding: 2px 0 0 15px; background: #535353; border-bottom: 2px solid #232323; color: #e4e4e4; font-size: 17px; white-space: nowrap; }
.marks a { display: flex; align-items: center; gap: 5px; }
.marks svg { width: 20px; height: 20px; }

/* firewall web interface */
.opn, .page { font-family: "Noto Sans CJK SC", "Source Sans Pro", sans-serif; font-size: 16px; line-height: 25px; }
.opn { display: flex; align-items: center; height: 64px; padding: 0 25px 0 26px; background: #3c3c3a; border-bottom: 1px solid #2c2c2c; color: #fff; }
.brand { display: flex; align-items: center; margin-right: auto; }
.opn-a { margin-left: 8px; font: 39px/40px "Liberation Sans Narrow", "DejaVu Sans Condensed", sans-serif; }
.opn-b { font: bold 25px/32px "Liberation Sans Narrow", "Liberation Sans", sans-serif; color: #d94f00; align-self: flex-end; }
.brand sup { font-size: 9px; line-height: 9px; align-self: flex-start; margin-top: 8px; }
.dot { width: 15px; height: 15px; border-radius: 50%; background: #777; margin: 0 25px 0 26px; }
.group { display: flex; border: 1px solid #ccc; border-radius: 3px; background: #fff; height: 43px; overflow: hidden; }
.group span { display: flex; align-items: center; justify-content: center; width: 48px; background: #eee; border-right: 1px solid #ccc; color: #444; }
.group svg { width: 20px; height: 20px; }
.group input { flex: 1; padding: 0 15px; color: #555; background: none; }
.group input::placeholder { color: #777; }
.find { width: 360px; }

.page { flex: 1; min-height: 0; display: flex; position: relative; overflow: hidden; }
.side { width: 284px; overflow: hidden; border-right: 1px solid #d5d5d5; background: #fff; }
.side > ul { margin-top: -14px; }
.side a { display: flex; align-items: center; height: 39px; padding: 0 12px 0 10px; }
.side .pre { width: 19px; height: 16px; margin-right: 12px; }
.side .open { background: #f5f5f5; }
.open ul a { padding-left: 51px; border-left: 4px solid #ee9a50; justify-content: space-between; }
.open ul ul a { height: 35px; padding-left: 63px; font-size: 14px; }
.side a.on { border-left: 4px solid #d94f00; }
.open > a.on { padding-left: 6px; }
.open ul a.sel { height: 37px; background: #e7e7e7; }
.side a.hot { color: #d94f00; }
.open ul svg { width: 18px; height: 18px; fill: currentColor; }

.content { flex: 1; min-width: 0; display: flex; flex-direction: column; background: #f7f7f7; }
.content h1 { height: 74px; padding-left: 25px; background: #fbfbfb; border-bottom: 1px solid #e5e5e5; font-size: 25px; line-height: 78px; font-weight: 700; }
.card { margin: 18px 24px 0 25px; border: 1px solid #e8e8e8; border-width: 0 1px; background: #fff; flex: 1; }
.bar { display: flex; justify-content: flex-end; align-items: center; gap: 25px; height: 80px; padding: 0 24px; }
.seek { width: 225px; }
.btns { display: flex; height: 42px; border: 1px solid #ddd; border-radius: 3px; }
.btns button { padding: 0 15px; gap: 3px; color: #555; }
.btns button + button { border-left: 1px solid #ddd; }
table { width: 100%; table-layout: fixed; border-collapse: collapse; border-top: 1px solid #e8e8e8; }
.c-run { width: 32px; }
.c-cmd { width: 115px; }
th, td { padding: 6px 10px 7px; text-align: left; vertical-align: top; }
th { padding-top: 7px; padding-bottom: 6px; font-size: 15px; font-weight: 700; white-space: nowrap; }
tbody tr { border-top: 1px solid #e8e8e8; }
tbody tr:nth-child(odd) { background: #fbfbfb; }
td b { font-size: 15px; font-weight: 700; }
td small { font-size: 13px; }
.wide { padding-right: 0; white-space: nowrap; }
.run { display: block; margin: 5px 0 0 2px; border: 8px solid transparent; border-left: 14px solid #96d375; border-right: 0; }
.plug { width: 18px; height: 18px; margin-top: 4px; }
.cmd div { display: flex; gap: 2px; }
.cmd button { width: 29px; height: 27px; margin-top: 1px; border: 1px solid #ddd; border-radius: 3px; background: #fff; }
.cmd button svg { width: 15px; height: 15px; }
.cmd .add { background: #d94f00; border-color: #d94f00; }
.cmd .add svg { width: 12px; height: 12px; }
.pager { display: flex; justify-content: space-between; padding: 19px 24px 17px; }
.pages { display: flex; height: 42px; border: 1px solid #ddd; border-right: 0; border-radius: 3px 0 0 3px; line-height: 40px; color: #888; }
.pages a { padding: 0 15px; border-right: 1px solid #ddd; }
.pages a:last-child { border: 0; }
.pages .cur { margin: -1px 0; line-height: 42px; padding: 0 16px; background: #d94f00; color: #fff; }
.content footer { height: 72px; padding: 22px 25px; border-top: 1px solid #e5e5e5; background: #fbfbfb; font-size: 14px; }
.content footer a { color: #d94f00; }
.hint { position: absolute; left: 0; bottom: 0; height: 29px; padding: 0 10px 0 5px; background: #333; border-top: 1px solid #111; border-radius: 0 5px 0 0; color: #e8e8e8; font: 17px/30px "Noto Sans", sans-serif; white-space: nowrap; }

/* guest window list */
.windows { display: flex; align-items: center; gap: 9px; height: 42px; padding: 0 4px 0 3px; background: linear-gradient(90deg, #2c3f50, #233548 60%, #22293f); font-size: 16px; font-weight: 700; }
.windows button { flex: 0 1 325px; justify-content: flex-start; gap: 6px; height: 34px; padding: 0 8px; border-radius: 3px; background: #eee; border: 1px solid #bbb; color: #888; text-shadow: 1px 1px 1px #0003; white-space: nowrap; }
.windows button.live { background: #ccc; color: #333; font-weight: 600; }
.windows button svg { width: 20px; height: 20px; }
.desks { display: flex; gap: 3px; margin-left: auto; }
.desks i { width: 56px; height: 32px; border: 2px solid #f8f8f8; border-radius: 4px; background: #ccc; }
.desks .at { background: #f6f5f4; border-color: #888; }

/* host taskbar */
.taskbar { display: flex; height: 60px; background: linear-gradient(90deg, #3a3a3a, #403a36 36%, #373a33 62%, #3f4140 84%, #424242); color: #fff; font-size: 17px; }
.start { width: 72px; }
.search { display: flex; align-items: center; width: 431px; padding: 2px 15px 0 15px; background: #f1f1f1; border: 2px solid #c6c6c6; color: #222; }
.search input { flex: 1; margin-left: 15px; background: none; font-size: 21px; }
.search input::placeholder { color: #222; }
.apps { display: flex; margin-left: 1px; }
.apps button { width: 75px; }
.apps .open { background: linear-gradient(#dfa058, #dfa058) center bottom / 61px 3px no-repeat; }
.apps .front { background: #656763; border-bottom: 3px solid #dfa058; }
.tray { display: flex; align-items: center; margin-left: auto; gap: 24px; padding-right: 28px; margin-right: 7px; border-right: 2px solid #888; }
.tray time { text-align: center; font-size: 18px; line-height: 28px; }
```
